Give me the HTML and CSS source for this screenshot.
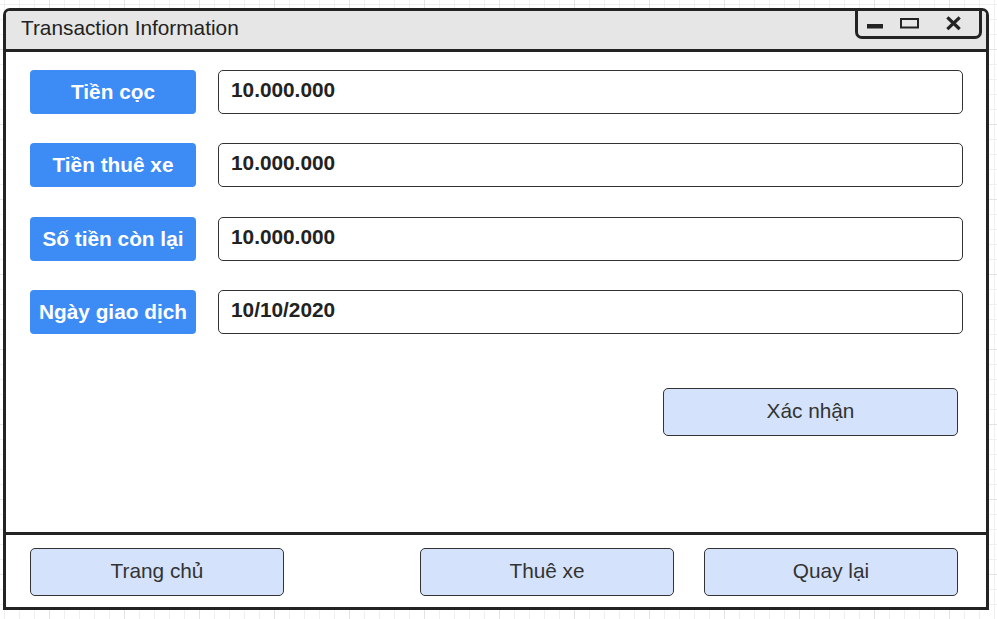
FILE: index.html
```html
<!DOCTYPE html>
<html lang="vi">
<head>
<meta charset="utf-8">
<title>Transaction Information</title>
<link rel="stylesheet" href="styles.css">
</head>
<body>
<div class="window">
  <div class="titlebar"><span class="title">Transaction Information</span></div>
  <div class="controls">
    <svg width="121" height="25" viewBox="0 0 121 25" xmlns="http://www.w3.org/2000/svg">
      <rect x="9" y="13" width="16" height="4.5" fill="#232323"/>
      <rect x="43" y="8" width="17" height="8.5" fill="none" stroke="#232323" stroke-width="2"/>
      <path d="M90.5 7.5 L100.5 17 M100.5 7.5 L90.5 17" stroke="#232323" stroke-width="3.2" stroke-linecap="square" fill="none"/>
    </svg>
  </div>
  <div class="content">
    <div class="rows">
      <div class="row"><div class="label">Tiền cọc</div><div class="field">10.000.000</div></div>
      <div class="row"><div class="label">Tiền thuê xe</div><div class="field">10.000.000</div></div>
      <div class="row"><div class="label">Số tiền còn lại</div><div class="field">10.000.000</div></div>
      <div class="row"><div class="label">Ngày giao dịch</div><div class="field">10/10/2020</div></div>
    </div>
    <div class="actions"><button class="btn btn-confirm">Xác nhận</button></div>
  </div>
  <div class="footer">
    <button class="btn">Trang chủ</button>
    <button class="btn push">Thuê xe</button>
    <button class="btn">Quay lại</button>
  </div>
</div>
</body>
</html>
```

FILE: styles.css
```css
html, body {
  margin: 0;
  height: 100%;
}

body {
  box-sizing: border-box;
  padding: 8px 0 0 3px;
  font-family: "Liberation Sans", Arial, sans-serif;
  background-color: #ffffff;
  background-image:
    linear-gradient(to right, #e3e3e3 1px, transparent 1px),
    linear-gradient(to bottom, #e3e3e3 1px, transparent 1px),
    linear-gradient(to right, #f0f0f0 1px, transparent 1px),
    linear-gradient(to bottom, #f0f0f0 1px, transparent 1px);
  background-size: 75px 75px, 75px 75px, 15px 15px, 15px 15px;
  background-position: 49px 49px, 49px 49px, 4px 4px, 4px 4px;
}

.window {
  position: relative;
  box-sizing: border-box;
  width: 986px;
  height: 602px;
  border: 3px solid #232323;
  border-radius: 7px 7px 0 0;
  background: #ffffff;
  display: flex;
  flex-direction: column;
}

.titlebar {
  box-sizing: border-box;
  height: 41px;
  flex: none;
  background: #e6e6e6;
  border-bottom: 3px solid #232323;
  border-radius: 4px 4px 0 0;
  display: flex;
  align-items: center;
  padding: 0 0 4px 15px;
}

.title {
  font-size: 20.8px;
  color: #222222;
}

.controls {
  position: absolute;
  top: -3px;
  right: 4px;
  box-sizing: border-box;
  width: 127px;
  height: 31px;
  border: 3px solid #232323;
  border-radius: 0 0 7px 7px;
  background: #e6e6e6;
}

.controls svg {
  display: block;
}

.content {
  flex: 1;
  padding: 18px 23px 0 24px;
}

.rows {
  display: flex;
  flex-direction: column;
  gap: 29.33px;
}

.row {
  display: flex;
  gap: 22px;
  height: 44px;
}

.label {
  flex: none;
  width: 166px;
  background: #3d8bf5;
  border-radius: 4px;
  color: #ffffff;
  font-weight: bold;
  font-size: 20.8px;
  display: flex;
  align-items: center;
  justify-content: center;
  white-space: nowrap;
}

.field {
  flex: 1;
  box-sizing: border-box;
  border: 1.5px solid #333333;
  border-radius: 5px;
  display: flex;
  align-items: center;
  padding: 0 0 4px 12px;
  font-weight: bold;
  font-size: 20.8px;
  color: #222222;
}

.actions {
  display: flex;
  justify-content: flex-end;
  margin-top: 54px;
  padding-right: 5px;
}

.btn {
  box-sizing: border-box;
  width: 254px;
  height: 48px;
  padding: 0 0 2px;
  font-family: inherit;
  font-size: 20.8px;
  color: #333333;
  background: #d4e3fb;
  border: 1.5px solid #333333;
  border-radius: 5px;
}

.btn-confirm {
  width: 295px;
}

.footer {
  box-sizing: border-box;
  height: 75px;
  flex: none;
  border-top: 3px solid #232323;
  padding: 13px 28px 0 24px;
  display: flex;
  align-items: flex-start;
}

.footer .push {
  margin-left: auto;
  margin-right: 30px;
}
```
